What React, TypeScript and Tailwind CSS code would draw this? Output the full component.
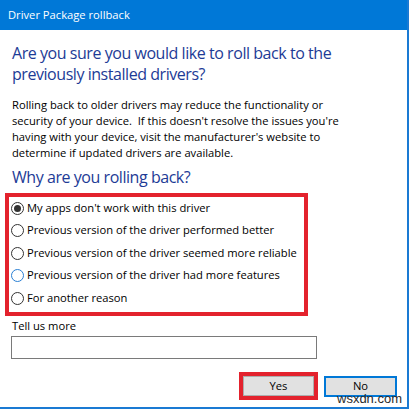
import React from "react";

const reasons = [
  "My apps don't work with this driver",
  "Previous version of the driver performed better",
  "Previous version of the driver seemed more reliable",
  "Previous version of the driver had more features",
  "For another reason",
];

function Radio({ checked, focused }: { checked?: boolean; focused?: boolean }) {
  return (
    <span
      className={`flex h-[13px] w-[13px] shrink-0 items-center justify-center rounded-full border bg-white ${
        focused ? "border-[#2a7fd4]" : "border-[#333333]"
      }`}
    >
      {checked && <span className="h-[7px] w-[7px] rounded-full bg-[#333333]" />}
    </span>
  );
}

export default function App() {
  return (
    <div className="relative h-[411px] w-[411px] bg-white font-['Open_Sans',sans-serif] text-[#000000]">
      <div className="flex h-[409px] w-[409px] flex-col border-b-2 border-r-2 border-[#1a7ad3]">
        <div className="flex h-[30px] shrink-0 items-center bg-[#0078d7] pl-2 text-[11.2px] text-white">
          Driver Package rollback
        </div>

        <h1 className="ml-3 mt-[13px] w-[340px] text-[16px] leading-[21px] tracking-[-0.45px] text-[#1d3b96]">
          Are you sure you would like to roll back to the previously installed drivers?
        </h1>

        <p className="ml-3 mt-[12px] w-[342px] text-[11.2px] leading-[16px]">
          Rolling back to older drivers may reduce the functionality or security of your device.&nbsp; If this doesn't resolve the issues you're having with your device, visit the manufacturer's website to determine if updated drivers are available.
        </p>

        <h2 className="ml-3 mt-[5px] text-[16px] leading-[22px] tracking-[-0.45px] text-[#1d3b96]">
          Why are you rolling back?
        </h2>

        <div className="ml-[5px] mt-[5px] flex h-[123px] w-[303px] flex-col border-4 border-[#e3222d]">
          <div>
            {reasons.map((r, i) => (
              <div key={r} className="flex h-[22.5px] items-center gap-[3px] pl-[2px] text-[11.2px]">
                <Radio checked={i === 0} focused={i === 3} />
                <span>{r}</span>
              </div>
            ))}
          </div>
        </div>

        <div className="ml-3 mt-[2px] text-[11.2px] leading-[16px]">Tell us more</div>
        <div className="ml-[11px] mt-[2px] h-[23px] w-[306px] border border-[#7a7a7a] bg-white" />

        <div className="mr-[10px] mt-[13px] flex justify-end gap-[6px]">
          <div className="border-4 border-[#e3222d]">
            <button className="flex h-[20px] w-[71px] items-center justify-center border border-[#adadad] bg-[#e1e1e1] text-[11.2px]">
              Yes
            </button>
          </div>
          <button className="mt-[4px] flex h-[21px] w-[73px] items-center justify-center border-2 border-[#0078d7] bg-[#e1e1e1] text-[11.2px]">
            No
          </button>
        </div>
      </div>

      <div className="absolute left-[337px] top-[391px] font-['Liberation_Sans',sans-serif] text-[13px] leading-[16px] text-[#2b2b2b]">
        wsxdn.com
      </div>
    </div>
  );
}
